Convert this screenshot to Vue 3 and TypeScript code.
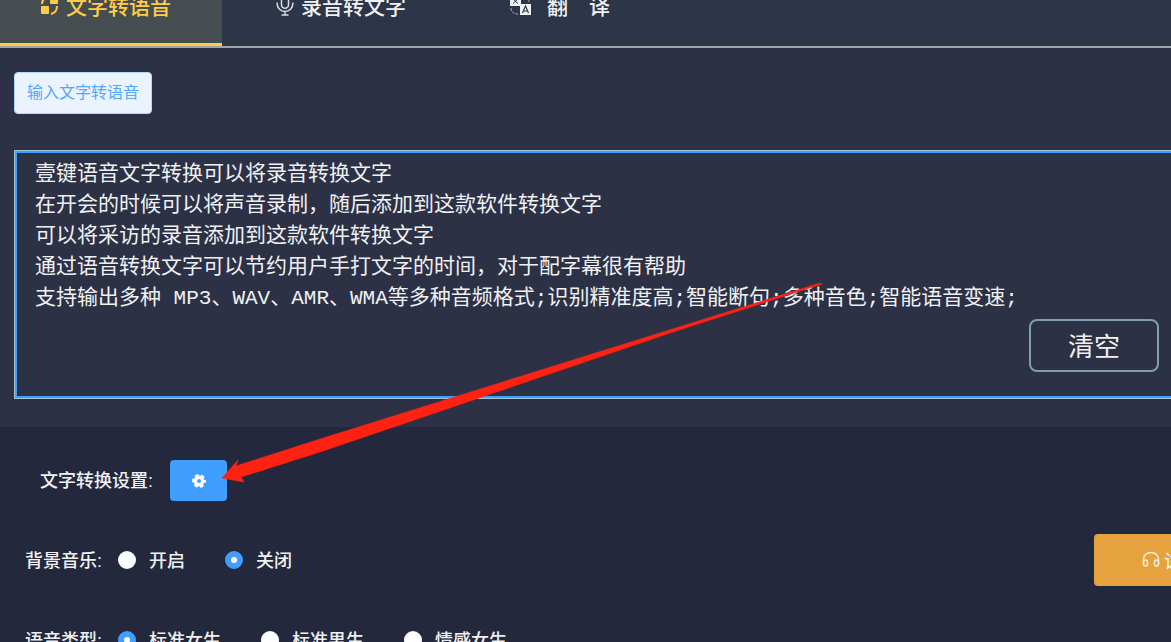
<script setup lang="ts">
import { ref } from 'vue'

const content = ref(
  [
    '壹键语音文字转换可以将录音转换文字',
    '在开会的时候可以将声音录制，随后添加到这款软件转换文字',
    '可以将采访的录音添加到这款软件转换文字',
    '通过语音转换文字可以节约用户手打文字的时间，对于配字幕很有帮助',
    '支持输出多种 MP3、WAV、AMR、WMA等多种音频格式;识别精准度高;智能断句;多种音色;智能语音变速;',
  ].join('\n'),
)

const music = ref('关闭')
const musicOptions: string[] = ['开启', '关闭']

const voice = ref('标准女生')
const voiceOptions: string[] = ['标准女生', '标准男生', '情感女生']
</script>

<template>
  <div class="page">
    <nav class="tabs">
      <a class="tab active" href="#speech">
        <svg class="tab-icon" width="18" height="22" viewBox="0 0 18 22" aria-hidden="true">
          <rect x="0" y="12" width="8" height="8" rx="1" fill="#ffcd45" />
          <rect x="9" y="2" width="8" height="8" rx="1" fill="#ffcd45" />
          <path d="M1 10C1 7 2 5 5 4M16 12C16 16 14 19 10 20" fill="none" stroke="#ffcd45" stroke-width="2" />
        </svg>
        <span>文字转语音</span>
      </a>
      <a class="tab second" href="#text">
        <svg class="tab-icon" width="18" height="22" viewBox="0 0 18 22" aria-hidden="true">
          <g fill="none" stroke="#d8dbe2" stroke-width="1.5">
            <rect x="5.5" y="0.8" width="7" height="13.5" rx="3.5" />
            <path d="M1 8.5C1 20.5 17 20.5 17 8.5M9 17.5V21M5.5 21H12.5" />
          </g>
        </svg>
        <span>录音转文字</span>
      </a>
      <a class="tab third" href="#translate">
        <svg class="tab-icon" width="22" height="22" viewBox="0 0 22 22" aria-hidden="true">
          <rect x="0" y="1" width="11" height="11" fill="#f0f1f4" />
          <path d="M2 4H9M5.500 2.500V4M3 9.500L8 5M3.500 5.500L8 9.500" fill="none" stroke="#2d3549" />
          <rect x="10" y="10" width="11" height="11" fill="#f0f1f4" />
          <path d="M12.500 19L15.500 12L18.500 19M13.500 17H17.500" fill="none" stroke="#2d3549" stroke-width="1.200" />
          <path d="M1 14C1 18 4 20 8 20M13 2C17 2 19 4 19 8" fill="none" stroke="#aeb3bf" stroke-dasharray="3 1" />
        </svg>
        <span>翻&emsp;译</span>
      </a>
    </nav>

    <main class="editor">
      <button class="input-btn" type="button">输入文字转语音</button>
      <div class="text-wrap">
        <textarea v-model="content" class="text" aria-label="输入文字转语音" spellcheck="false"></textarea>
        <button class="clear" type="button" @click="content = ''">清空</button>
      </div>
    </main>

    <section class="settings">
      <div class="row convert">
        <span id="convert-label" class="caption">文字转换设置:</span>
        <button class="gear" type="button" aria-labelledby="convert-label">
          <svg width="14" height="14" viewBox="0 0 14 14" aria-hidden="true">
            <circle cx="7" cy="7" r="3.700" fill="none" stroke="#fff" stroke-width="3.400" />
            <circle cx="7" cy="7" r="5.700" fill="none" stroke="#fff" stroke-width="2.400" stroke-dasharray="3.600 2.369" stroke-dashoffset="1.800" />
          </svg>
        </button>
      </div>

      <div class="row" role="radiogroup" aria-labelledby="music-label">
        <span id="music-label" class="caption name">背景音乐:</span>
        <label v-for="item in musicOptions" :key="item" class="option">
          <input v-model="music" type="radio" name="music" :value="item" />
          <span class="caption">{{ item }}</span>
        </label>
        <button class="listen" type="button">
          <svg width="18" height="18" viewBox="0 0 18 18" aria-hidden="true">
            <g fill="none" stroke="#fdeed6" stroke-width="1.500">
              <path d="M1.500 13V8.500C1.500 -1 16.500 -1 16.500 8.500V13" />
              <rect x="1.500" y="9" width="4" height="6" rx="2" />
              <rect x="12.500" y="9" width="4" height="6" rx="2" />
            </g>
          </svg>
          <span>试听</span>
        </button>
      </div>

      <div class="row" role="radiogroup" aria-labelledby="voice-label">
        <span id="voice-label" class="caption name">语音类型:</span>
        <label v-for="item in voiceOptions" :key="item" class="option">
          <input v-model="voice" type="radio" name="voice" :value="item" />
          <span class="caption">{{ item }}</span>
        </label>
      </div>
    </section>

    <svg class="arrow" width="602" height="202" viewBox="0 0 602 202" aria-hidden="true">
      <path d="M0 195L16 177L14 183L98 156L598 0L600 1L448 50L98 169L19 194L22 199Z" fill="#ff2213" stroke="#ff2213" stroke-width="0.600" />
    </svg>
  </div>
</template>

<style>
body {
  margin: 0;
  background: #24283d;
}
</style>

<style scoped>
.page {
  position: relative;
  height: 100vh;
  overflow: hidden;
  background: #24283d;
  color: #f0f1f4;
  font-family: "Liberation Sans", "Noto Sans CJK SC", sans-serif;
  font-size: 18px;
}

.page * {
  box-sizing: border-box;
}

button {
  font-family: inherit;
  padding: 0;
  cursor: pointer;
}

.tabs {
  display: flex;
  height: 48px;
  background: #2d3549;
  border-bottom: 2px solid #a0a3aa;
}

.tab {
  display: flex;
  align-items: flex-end;
  gap: 7px;
  width: 222px;
  padding: 0 0 23px 41px;
  color: #f0f1f4;
  font-size: 21px;
  font-weight: 500;
  line-height: 32px;
  text-decoration: none;
  white-space: nowrap;
}

.tab-icon {
  flex: none;
  margin-bottom: 7px;
}

.tab.active {
  padding-bottom: 20px;
  background: #464d50;
  border-bottom: 3px solid #ffcd45;
  color: #ffcd45;
}

.tab.second {
  padding-left: 54px;
}

.tab.third {
  gap: 15px;
  padding-left: 66px;
}

.editor {
  padding: 24px 0 28px 14px;
  background: #2c3145;
}

.input-btn {
  display: block;
  width: 138px;
  height: 42px;
  padding-bottom: 4px;
  border: 1px solid #b3d8ff;
  border-radius: 4px;
  background: #ebf3ff;
  color: #52a7ff;
  font-size: 16px;
}

.text-wrap {
  position: relative;
  margin-top: 36px;
}

.text {
  display: block;
  width: calc(100% + 20px);
  height: 249px;
  padding: 8px 20px;
  border: 1px solid #9cc4d4;
  outline: 2px solid #409eff;
  outline-offset: -3px;
  background: transparent;
  color: #f0f1f4;
  font-family: "Liberation Mono", "Noto Sans CJK SC", monospace;
  font-size: 21px;
  line-height: 31px;
  resize: none;
  overflow: hidden;
}

.clear {
  position: absolute;
  right: 12px;
  bottom: 27px;
  width: 130px;
  height: 53px;
  padding-bottom: 2px;
  border: 2px solid #7b9fb0;
  border-radius: 8px;
  background: #2c3145;
  color: #f0f1f4;
  font-size: 26px;
}

.settings {
  padding: 33px 0 0 25px;
}

.row {
  display: flex;
  align-items: center;
  height: 52px;
  margin-bottom: 28px;
  font-weight: 500;
  white-space: nowrap;
}

.caption {
  padding-bottom: 3px;
}

.row.convert {
  gap: 17px;
  height: 41px;
  margin-bottom: 33px;
  padding-left: 15px;
}

.gear {
  display: flex;
  align-items: center;
  justify-content: center;
  width: 57px;
  height: 41px;
  border: 0;
  border-radius: 4px;
  background: #409eff;
}

.name {
  width: 93px;
}

.option {
  display: flex;
  align-items: center;
  gap: 13px;
  margin-right: 40px;
}

.option input {
  appearance: none;
  width: 18px;
  height: 18px;
  margin: 0;
  border-radius: 50%;
  background: #fff;
}

.option input:checked {
  border: 6px solid #409eff;
}

.listen {
  display: flex;
  flex: none;
  align-items: center;
  gap: 4px;
  width: 140px;
  height: 52px;
  margin-left: auto;
  margin-right: -63px;
  padding-left: 48px;
  border: 0;
  border-radius: 4px;
  background: #e6a23c;
  color: #fff;
  font-size: 18px;
}

.arrow {
  position: absolute;
  left: 222px;
  top: 283px;
  pointer-events: none;
}
</style>
